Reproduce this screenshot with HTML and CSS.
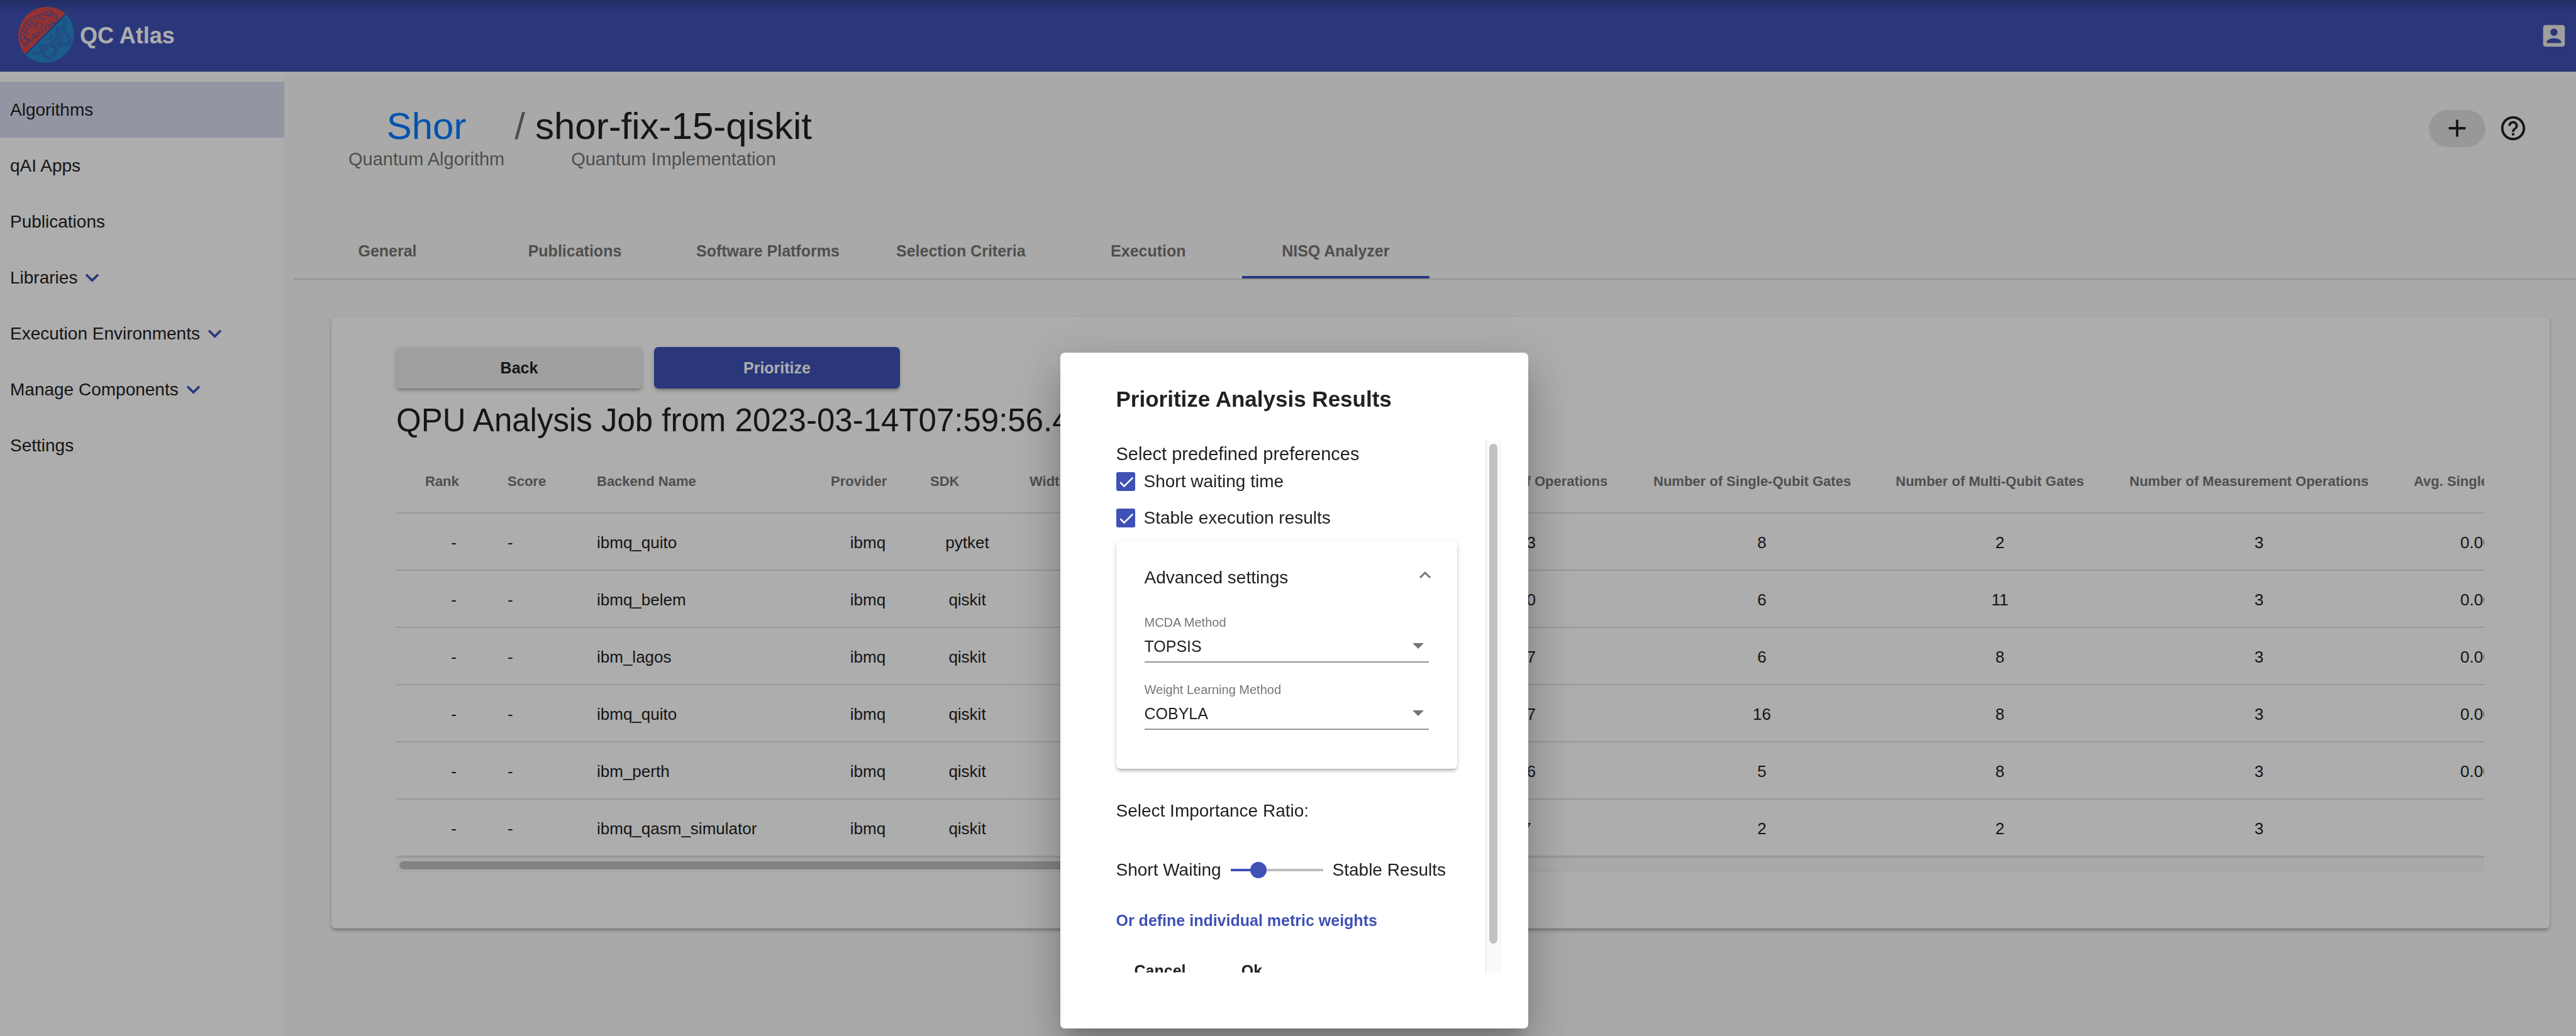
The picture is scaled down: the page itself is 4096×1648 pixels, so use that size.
FILE: index.html
```html
<!DOCTYPE html>
<html lang="en">
<head>
<meta charset="utf-8">
<title>QC Atlas</title>
<link rel="stylesheet" href="styles.css">
</head>
<body>
<svg class="sprite" aria-hidden="true">
  <symbol id="expand" viewBox="0 0 24 24"><path d="M16.59 8.59 12 13.17 7.41 8.59 6 10l6 6 6-6z"/></symbol>
  <symbol id="add" viewBox="0 0 24 24"><path d="M19 13h-6v6h-2v-6H5v-2h6V5h2v6h6z"/></symbol>
</svg>

<header class="toolbar">
  <a class="brand" href="#">
    <svg class="brand-logo" viewBox="36 30 342 364" aria-hidden="true">
      <path class="logo-red" d="M325 78A171 171 0 0 0 86 320Z"/>
      <path class="logo-blue" d="M333 86A171 171 0 0 1 90 326Z"/>
      <g class="logo-line">
        <path d="M98 272c-12 2-20-6-16-16-12 0-18-10-14-20-10-6-12-18-4-26-6-10-2-20 6-24-6-12 0-24 10-26-2-14 6-22 16-22-2-14 10-22 22-18 2-14 14-20 26-14 4-14 16-20 28-14 4-10 14-14 24-10 4-10 14-14 22-10 4-12 22-14 26 0 8-4 16 6 12 16 12-6 22 4 18 14 8 6 6 18-4 20 2 12-8 20-18 16-2 12-12 16-22 12-2 12-12 16-20 14 2 12-8 20-20 16-4 12-10 16-18 16 2 12-8 20-16 16-4 10-12 14-20 12 2 10-6 18-16 16-2 8-12 14-14 10-2 12-4 18-12 22z"/>
        <path d="M82 256c10 2 18-2 20-12M68 236c10 2 16-4 18-14M64 210c10-4 22 0 24 12s14 14 18 4M70 186c14-4 20 8 14 16M80 160c14-2 22 8 16 20s4 22 14 18M96 138c4 10 12 12 20 8M118 120c-4 12 4 20 14 16s16 6 10 16-2 20 8 18M144 106c-4 8 0 18 10 18s12 10 6 18M172 92c-8 6-6 18 4 20s14-6 12-14M196 82c-2 10 6 14 12 8s18 0 16 12M218 72c-2 12 8 16 16 10M244 72c-6 8-14 8-18 16 8 8 18 4 22-4M256 88c-8-2-14 2-14 12M274 102c-10-4-18 2-14 12M252 138c-6-12-16-14-22-4M230 150c-8-12-22-10-22 2M210 164c-8-10-4-20 6-22M190 180c-10-4-14-16-4-22s4-18-6-16M172 196c-12-2-16-14-6-20M156 212c-10-4-14-14-4-20M136 224c-10-6-10-18 2-22M120 240c-6-10-20-10-20 2M108 250c-8-4-8-10-4-14M190 112c6 10 16 8 20-2M150 140c8 4 10 14 4 22M110 150c10 0 16 8 12 16"/>
      </g>
      <g class="orbit">
        <path d="M320 118C334 175 292 225 272 285C254 360 212 362 186 296C182 284 178 274 176 260"/>
        <path d="M128 309C190 332 215 282 245 255C290 215 310 190 320 172"/>
        <path d="M280 165C335 180 380 245 330 262C285 280 225 270 178 270"/>
        <path d="M283 166C272 190 284 225 300 262C296 272 285 274 272 272"/>
      </g>
      <g class="orbit-core">
        <path d="M320 118C334 175 292 225 272 285C254 360 212 362 186 296C182 284 178 274 176 260"/>
        <path d="M128 309C190 332 215 282 245 255C290 215 310 190 320 172"/>
        <path d="M280 165C335 180 380 245 330 262C285 280 225 270 178 270"/>
        <path d="M283 166C272 190 284 225 300 262C296 272 285 274 272 272"/>
      </g>
      <path class="logo-line" d="M238 200C250 225 225 242 203 235"/>
    </svg>
    <span>QC Atlas</span>
  </a>
  <button class="icon-button account" aria-label="Account">
    <svg viewBox="0 0 24 24"><path d="M3 5v14c0 1.100.89 2 2 2h14c1.100 0 2-.9 2-2V5c0-1.100-.9-2-2-2H5c-1.110 0-2 .9-2 2zm12 4c0 1.660-1.340 3-3 3s-3-1.340-3-3 1.340-3 3-3 3 1.340 3 3zm-9 8c0-2 4-3.100 6-3.100s6 1.100 6 3.100v1H6v-1z"/></svg>
  </button>
</header>

<div class="layout">
  <nav class="sidebar">
    <a class="nav-item active" href="#">Algorithms</a>
    <a class="nav-item" href="#">qAI Apps</a>
    <a class="nav-item" href="#">Publications</a>
    <a class="nav-item" href="#">Libraries<svg><use href="#expand"/></svg></a>
    <a class="nav-item" href="#">Execution Environments<svg><use href="#expand"/></svg></a>
    <a class="nav-item" href="#">Manage Components<svg><use href="#expand"/></svg></a>
    <a class="nav-item" href="#">Settings</a>
  </nav>

  <main class="content">
    <div class="page-head">
      <div class="crumbs">
        <div class="crumb"><a class="crumb-title" href="#">Shor</a><span class="crumb-kind">Quantum Algorithm</span></div>
        <span class="crumb-title separator">/</span>
        <div class="crumb"><h1 class="crumb-title">shor-fix-15-qiskit</h1><span class="crumb-kind">Quantum Implementation</span></div>
      </div>
      <div class="actions">
        <button class="add-button" aria-label="Add"><svg><use href="#add"/></svg></button>
        <button class="icon-button" aria-label="Help"><svg viewBox="0 0 24 24"><path d="M11 18h2v-2h-2v2zm1-16C6.480 2 2 6.480 2 12s4.480 10 10 10 10-4.480 10-10S17.520 2 12 2zm0 18c-4.410 0-8-3.590-8-8s3.590-8 8-8 8 3.590 8 8-3.590 8-8 8zm0-14c-2.210 0-4 1.790-4 4h2c0-1.100.9-2 2-2s2 .9 2 2c0 2-3 1.750-3 5h2c0-2.250 3-2.500 3-5 0-2.210-1.790-4-4-4z"/></svg></button>
      </div>
    </div>

    <nav class="tabs">
      <a class="tab" href="#">General</a>
      <a class="tab" href="#">Publications</a>
      <a class="tab" href="#">Software Platforms</a>
      <a class="tab" href="#">Selection Criteria</a>
      <a class="tab" href="#">Execution</a>
      <a class="tab selected" href="#">NISQ Analyzer</a>
    </nav>

    <section class="card">
      <div class="button-row">
        <button class="raised">Back</button>
        <button class="raised primary">Prioritize</button>
      </div>
      <h2 class="job-title">QPU Analysis Job from 2023-03-14T07:59:56.4</h2>
      <div class="table-scroll">
        <table class="results">
          <colgroup>
            <col class="w-rank"><col class="w-score"><col class="w-name"><col class="w-small"><col class="w-small"><col class="w-width">
            <col class="w-total"><col class="w-single"><col class="w-multi"><col class="w-measure"><col class="w-avg">
          </colgroup>
          <thead>
            <tr>
              <th class="left rank">Rank</th><th class="left">Score</th><th class="left">Backend Name</th><th>Provider</th><th class="left">SDK</th><th class="left">Width</th>
              <th>Total Number of Operations</th><th>Number of Single-Qubit Gates</th><th>Number of Multi-Qubit Gates</th><th>Number of Measurement Operations</th><th class="left">Avg. Single-Qubit Gate Error</th>
            </tr>
          </thead>
          <tbody>
            <tr><td class="rank">-</td><td class="left">-</td><td class="left">ibmq_quito</td><td>ibmq</td><td>pytket</td><td></td><td>13</td><td>8</td><td>2</td><td>3</td><td class="avg">0.000</td></tr>
            <tr><td class="rank">-</td><td class="left">-</td><td class="left">ibmq_belem</td><td>ibmq</td><td>qiskit</td><td></td><td>20</td><td>6</td><td>11</td><td>3</td><td class="avg">0.000</td></tr>
            <tr><td class="rank">-</td><td class="left">-</td><td class="left">ibm_lagos</td><td>ibmq</td><td>qiskit</td><td></td><td>17</td><td>6</td><td>8</td><td>3</td><td class="avg">0.000</td></tr>
            <tr><td class="rank">-</td><td class="left">-</td><td class="left">ibmq_quito</td><td>ibmq</td><td>qiskit</td><td></td><td>27</td><td>16</td><td>8</td><td>3</td><td class="avg">0.000</td></tr>
            <tr><td class="rank">-</td><td class="left">-</td><td class="left">ibm_perth</td><td>ibmq</td><td>qiskit</td><td></td><td>16</td><td>5</td><td>8</td><td>3</td><td class="avg">0.000</td></tr>
            <tr><td class="rank">-</td><td class="left">-</td><td class="left">ibmq_qasm_simulator</td><td>ibmq</td><td>qiskit</td><td></td><td>7</td><td>2</td><td>2</td><td>3</td><td></td></tr>
          </tbody>
        </table>
      </div>
      <div class="scrollbar-x"><div class="thumb"></div></div>
    </section>
  </main>
</div>

<div class="backdrop">
  <form class="dialog" role="dialog" aria-labelledby="dialog-title">
    <h2 class="dialog-title" id="dialog-title">Prioritize Analysis Results</h2>
    <div class="dialog-body">
      <div class="dialog-content">
        <h3 class="pref-title">Select predefined preferences</h3>
        <div class="checks">
          <label class="check"><input type="checkbox" checked>Short waiting time</label>
          <label class="check"><input type="checkbox" checked>Stable execution results</label>
        </div>
        <section class="panel">
          <button type="button" class="panel-head">Advanced settings
            <svg viewBox="0 0 20 22" aria-hidden="true"><path d="M2 11 10 3l8 8"/></svg>
          </button>
          <div class="fields">
            <div class="field">
              <label for="mcda">MCDA Method</label>
              <div class="select-box"><select id="mcda"><option>TOPSIS</option></select></div>
            </div>
            <div class="field">
              <label for="weights">Weight Learning Method</label>
              <div class="select-box"><select id="weights"><option>COBYLA</option></select></div>
            </div>
          </div>
        </section>
        <label class="ratio-title" for="ratio">Select Importance Ratio:</label>
        <div class="ratio">
          <span>Short Waiting</span>
          <input type="range" id="ratio" min="0" max="100" value="26">
          <span>Stable Results</span>
        </div>
        <button type="button" class="text-button link">Or define individual metric weights</button>
        <div class="dialog-actions">
          <button type="button" class="text-button">Cancel</button>
          <button type="button" class="text-button">Ok</button>
        </div>
      </div>
      <div class="scrollbar-y"><div class="thumb"></div></div>
    </div>
  </form>
</div>
</body>
</html>
```

FILE: styles.css
```css
:root {
  --primary: #3f51b5;
  --text: #212121;
  --muted: #757575;
  --line: #e0e0e0;
  --radius: 7px;
  --raised: 0 5px 2px -4px rgba(0, 0, 0, .2), 0 4px 4px rgba(0, 0, 0, .14), 0 2px 9px rgba(0, 0, 0, .12);
}

* { box-sizing: border-box; }

body {
  margin: 0;
  min-height: 100vh;
  display: flex;
  flex-direction: column;
  overflow: hidden;
  background: #fafafa;
  color: var(--text);
  font-family: "Helvetica Neue", "Liberation Sans", Arial, sans-serif;
  font-size: 28px;
}

h1, h2, h3 { margin: 0; font-weight: 400; }
a { color: inherit; text-decoration: none; }
button { border: 0; padding: 0; background: none; color: inherit; font: inherit; font-weight: 700; font-size: 25px; }
svg { fill: currentColor; }
.sprite { display: none; }

/* Toolbar */
.toolbar {
  height: 114px;
  padding: 0 12px 0 26px;
  display: flex;
  align-items: center;
  justify-content: space-between;
  background: linear-gradient(rgba(0, 0, 0, .18), transparent 18px) var(--primary);
  color: #fff;
}
.brand { display: flex; align-items: center; gap: 9px; font-size: 36px; font-weight: 700; }
.brand-logo { width: 92px; height: 98px; }
.logo-red { fill: #da4a48; }
.logo-blue { fill: #298acc; }
.logo-line, .orbit, .orbit-core { fill: none; stroke: var(--primary); stroke-width: 4; stroke-linecap: round; stroke-linejoin: round; }
.orbit { stroke-width: 15; stroke-linecap: butt; }
.orbit-core { stroke: #298acc; stroke-width: 7; stroke-linecap: butt; }
.icon-button { display: flex; }
.icon-button svg { width: 46px; height: 46px; }
.account { color: #eaeaea; }

/* Layout */
.layout { flex: 1; display: flex; }
.sidebar { flex: none; width: 452px; padding-top: 16px; background: #fff; }
.nav-item { height: 89px; padding-left: 16px; display: flex; align-items: center; }
.nav-item.active { background: #d9dcf0; }
.nav-item svg { width: 43px; height: 43px; margin-left: 2px; color: var(--primary); }
.content { flex: 1; min-width: 0; padding: 51px 0 0 15px; }

/* Page head */
.page-head { display: flex; justify-content: space-between; padding: 0 77px 0 87px; }
.crumbs { display: flex; gap: 16px; }
.crumb { display: flex; flex-direction: column; align-items: center; }
.crumb-title { font-size: 60px; line-height: 72px; }
a.crumb-title { color: #007bff; }
.separator { color: #6c757d; }
.crumb-kind { font-size: 29px; line-height: 32px; color: var(--muted); }
.actions { display: flex; align-items: center; gap: 21px; height: 78px; }
.add-button { width: 90px; height: 59px; border-radius: 30px; background: var(--line); display: flex; align-items: center; justify-content: center; }
.add-button svg { width: 46px; height: 46px; }

/* Tabs */
.tabs { display: flex; margin-top: 87px; border-bottom: 2px solid #dcdcdc; }
.tab { min-width: 298px; height: 87px; padding: 4px 44px 0; display: flex; align-items: center; justify-content: center; border-bottom: 4px solid transparent; font-size: 25px; font-weight: 700; color: var(--muted); }
.tab.selected { border-color: var(--primary); }

/* Results card */
.card { margin: 59px 42px 0 60px; padding: 48px 104px 90px 103px; border-radius: var(--radius); background: #fff; box-shadow: var(--raised); }
.button-row { display: flex; gap: 19px; }
.raised { width: 391px; height: 66px; border-radius: var(--radius); background: #ececec; box-shadow: var(--raised); }
.raised.primary { background: var(--primary); color: #fff; }
.job-title { padding-top: 4px; font-size: 51px; line-height: 94px; }
.table-scroll { overflow: hidden; }
.results { width: 3573px; table-layout: fixed; border-collapse: separate; border-spacing: 0; }
.results th, .results td { border-bottom: 2px solid var(--line); text-align: center; white-space: nowrap; }
.results th { height: 101px; padding: 0 52px 0 20px; font-size: 22px; font-weight: 700; color: var(--muted); }
.results td { height: 91px; padding: 3px 20px 0; font-size: 26px; }
.results .left { text-align: left; }
.results .rank { padding-left: 46px; }
.results .avg { padding-left: 94px; text-align: left; }
.w-rank { width: 157px; }
.w-score { width: 142px; }
.w-name { width: 372px; }
.w-small { width: 158px; }
.w-width { width: 629px; }
.w-total { width: 363px; }
.w-single { width: 385px; }
.w-multi { width: 372px; }
.w-measure { width: 452px; }
.w-avg { width: 385px; }
.scrollbar-x { height: 24px; padding: 5px 5px 0; border-top: 2px solid #e8e8e8; border-bottom: 1px solid #ededed; background: #fafafa; }
.scrollbar-x .thumb { width: 50%; height: 13px; border-radius: 7px; background: #c1c1c1; }

/* Dialog */
.backdrop { position: fixed; inset: 0; display: flex; justify-content: center; padding: 561px 0 12px 19px; background: rgba(0, 0, 0, .32); }
.dialog {
  width: 744px;
  padding: 42px 44px 89px 89px;
  display: flex;
  flex-direction: column;
  border-radius: var(--radius);
  background: #fff;
  box-shadow: 0 20px 27px -12px rgba(0, 0, 0, .2), 0 43px 68px 5px rgba(0, 0, 0, .14), 0 16px 82px 14px rgba(0, 0, 0, .12);
}
.dialog-title { margin-bottom: 35px; font-size: 35px; line-height: 63px; font-weight: 700; }
.dialog-body { flex: 1; min-height: 0; display: flex; overflow: hidden; margin-left: -20px; padding-left: 20px; }
.dialog-content { flex: 1; padding-right: 45px; }
.scrollbar-y { width: 24px; padding: 5px 4px 46px; border-left: 2px solid #e8e8e8; border-right: 1px solid #ededed; background: #fafafa; }
.scrollbar-y .thumb { width: 13px; height: 100%; border-radius: 7px; background: #c1c1c1; }
.pref-title { font-size: 29px; line-height: 43px; }
.checks { display: flex; flex-direction: column; gap: 15px; }
.check { height: 43px; display: flex; align-items: center; gap: 14px; }
.check input {
  appearance: none;
  width: 30px;
  height: 30px;
  margin: 0;
  border-radius: 3px;
  background: var(--primary) url("data:image/svg+xml,%3Csvg xmlns='http://www.w3.org/2000/svg' viewBox='0 0 24 24'%3E%3Cpath d='M5 13l5 5L21 7' fill='none' stroke='white' stroke-width='2'/%3E%3C/svg%3E") center / contain;
}
.panel { margin-top: 16px; padding-bottom: 62px; border-radius: var(--radius); box-shadow: var(--raised); }
.panel-head { width: 100%; height: 116px; padding: 0 41px 0 45px; display: flex; align-items: center; justify-content: space-between; font-size: 28px; font-weight: 400; }
.panel-head svg { width: 20px; height: 22px; fill: none; stroke: var(--muted); stroke-width: 3; }
.fields { display: flex; flex-direction: column; gap: 30px; padding: 0 45px; }
.field label { display: block; font-size: 20px; line-height: 26px; color: var(--muted); }
.select-box { position: relative; border-bottom: 2px solid #949494; }
.select-box::after { content: ""; position: absolute; top: 20px; right: 8px; border: 9px solid transparent; border-top-color: var(--muted); border-bottom: 0; pointer-events: none; }
.select-box select { display: block; appearance: none; width: 100%; height: 49px; padding: 0; border: 0; background: none; color: inherit; font: inherit; font-size: 25px; }
.ratio-title { display: block; margin-top: 47px; line-height: 40px; }
.ratio { display: flex; align-items: center; gap: 15px; height: 40px; margin-top: 54px; white-space: nowrap; }
.ratio input { appearance: none; width: 147px; height: 26px; margin: 0; background: linear-gradient(90deg, var(--primary) 30%, #bdbdbd 30%) center / 100% 4px no-repeat; }
.ratio input::-webkit-slider-thumb { appearance: none; width: 26px; height: 26px; border-radius: 50%; background: var(--primary); }
.text-button { height: 64px; min-width: 114px; padding: 0 29px; }
.text-button.link { display: block; margin-top: 28px; padding: 0; color: var(--primary); }
.dialog-actions { display: flex; gap: 19px; margin-top: 16px; }
```
